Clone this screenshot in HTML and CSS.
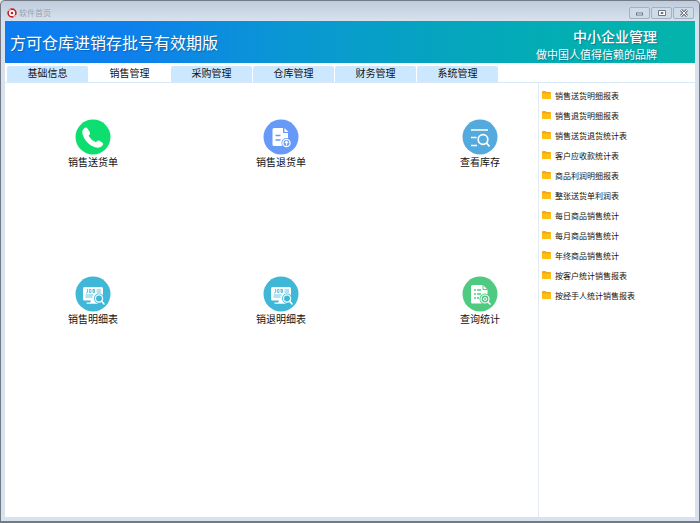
FILE: index.html
```html
<!DOCTYPE html>
<html lang="zh-CN">
<head>
<meta charset="utf-8">
<title>软件首页</title>
<link rel="stylesheet" href="styles.css">
</head>
<body>
<svg class="defs" aria-hidden="true">
  <symbol id="folder" viewBox="0 0 9 8">
    <path d="M0 1q0-1 1-1h2.5l1 1H8q1 0 1 1v5q0 1-1 1H1Q0 8 0 7z" fill="#f9a51c"/>
    <path d="M0 2.5h9V7q0 1-1 1H1Q0 8 0 7z" fill="#ffbf10"/>
  </symbol>
  <symbol id="report" viewBox="0 0 36 36">
    <circle cx="18" cy="18" r="17.5" fill="#3fb8d8"/>
    <rect x="8" y="11" width="20" height="13.5" rx="1.5" fill="#fff"/>
    <path d="M16 24h4l1 3h-6zM11.500 26.500h11v1.300h-11z" fill="#fff"/>
    <g fill="none" stroke="#3fb8d8" stroke-width=".8">
      <path d="M12.500 13v3q0 1-1.500 1M14.300 13.500h1.700v3h-1.700zM18 13v3.500M18 13.500h1.500v3H18M18 15h1.500M21.500 14h4.500M21.500 16h4.500M10.500 19h8M10.500 21h7"/>
    </g>
    <circle cx="24" cy="22.500" r="5" fill="#3fb8d8"/>
    <circle cx="24" cy="22.500" r="3.600" fill="#3fb8d8" stroke="#fff" stroke-width="1.300"/>
    <path d="M26.500 25l2.500 3" stroke="#fff" stroke-width="1.500" stroke-linecap="round"/>
  </symbol>
</svg>
<div class="window">
  <header class="titlebar">
    <svg class="app-icon" viewBox="0 0 10 10" aria-hidden="true">
      <circle cx="5" cy="5" r="3.900" fill="#fff" stroke="#b9252c" stroke-width="1.600"/>
      <circle cx="5" cy="5" r="1.300" fill="#b9252c"/>
      <path d="M1.500 3l2-2M8.500 7l-2 2" stroke="#fff"/>
    </svg>
    <span class="window-name">软件首页</span>
    <div class="window-buttons">
      <button type="button" aria-label="最小化"><svg viewBox="0 0 10 8"><rect x="1.500" y="4" width="6" height="2" fill="#fff" stroke="#6d7785"/></svg></button>
      <button type="button" aria-label="最大化"><svg viewBox="0 0 10 8"><path d="M1.500 1.500h7v5h-7zM4 3.500h2v1H4z" fill="#fff" stroke="#6d7785"/></svg></button>
      <button type="button" aria-label="关闭"><svg viewBox="0 0 10 8"><path d="M2 1l6 6M8 1L2 7" stroke="#6d7785" stroke-width="3"/><path d="M2 1l6 6M8 1L2 7" stroke="#fff"/></svg></button>
    </div>
  </header>
  <div class="banner">
    <h1>方可仓库进销存批号有效期版</h1>
    <div class="slogan">
      <strong>中小企业管理</strong>
      <span>做中国人值得信赖的品牌</span>
    </div>
  </div>
  <nav class="tabs">
    <button type="button">基础信息</button>
    <button type="button" class="active">销售管理</button>
    <button type="button">采购管理</button>
    <button type="button">仓库管理</button>
    <button type="button">财务管理</button>
    <button type="button">系统管理</button>
  </nav>
  <div class="content">
    <main class="shortcuts">
      <button type="button">
        <svg viewBox="0 0 36 36"><circle cx="18" cy="18" r="17.500" fill="#0cdf70"/><path d="M9 9.500q2-2 3.500 0l2.500 4q.8 1.700-1.500 3.200 2.500 4.500 7.500 6.600 1.500-2.500 3.500-1.500l3 2q1.500 1.300-.5 3.200-3.500 3.500-10 0Q9.500 22.500 7.500 15q-.8-3.500 1.500-5.500z" fill="#fff"/></svg>
        <span>销售送货单</span>
      </button>
      <button type="button">
        <svg viewBox="0 0 36 36"><circle cx="18" cy="18" r="17.500" fill="#6699f8"/><path d="M11 9h9v5h5v13H11q-1.500 0-1.500-1.500v-15Q9.500 9 11 9zM21.500 9l4 4h-4z" fill="#fff"/><path d="M12.500 16.500h5M12.500 21h5" stroke="#6699f8" stroke-width="1.600"/><circle cx="23.500" cy="24" r="5" fill="#6699f8"/><circle cx="23.500" cy="24" r="3.600" fill="none" stroke="#fff" stroke-width="1.300"/><path d="M23.500 26.500v-4M21.800 24l1.700-1.700 1.700 1.700" fill="none" stroke="#fff" stroke-width="1.100"/></svg>
        <span>销售退货单</span>
      </button>
      <button type="button">
        <svg viewBox="0 0 36 36"><circle cx="18" cy="18" r="17.500" fill="#54a9dd"/><g fill="none" stroke="#fff" stroke-width="1.700"><path d="M9 11h17M9 18.500h5.500M9 26.500h6"/><circle cx="21" cy="20.500" r="4.800"/><path d="M24.500 24l3 3.500"/></g></svg>
        <span>查看库存</span>
      </button>
      <button type="button">
        <svg><use href="#report"/></svg>
        <span>销售明细表</span>
      </button>
      <button type="button">
        <svg><use href="#report"/></svg>
        <span>销退明细表</span>
      </button>
      <button type="button">
        <svg viewBox="0 0 36 36"><circle cx="18" cy="18" r="17.500" fill="#4ecb80"/><path d="M10.500 9H21l4.500 4.500v14h-15q-1.500 0-1.500-1.500V10.500Q9 9 10.500 9z" fill="#fff"/><path d="M21 9v4.500h4.500" fill="none" stroke="#4ecb80"/><path d="M12 14h2m1 0h4M12 18h2m1 0h4M12 22h2m1 0h2" stroke="#4ecb80" stroke-width="1.300"/><circle cx="23" cy="23" r="5.500" fill="#4ecb80"/><circle cx="23" cy="23" r="4" fill="#4ecb80" stroke="#fff" stroke-width="1.200"/><circle cx="23" cy="23" r="1.500" fill="none" stroke="#fff"/><path d="M26 26l2.500 2.500" stroke="#fff" stroke-width="1.500"/></svg>
        <span>查询统计</span>
      </button>
    </main>
    <aside class="reports">
      <a href="#"><svg><use href="#folder"/></svg>销售送货明细报表</a>
      <a href="#"><svg><use href="#folder"/></svg>销售退货明细报表</a>
      <a href="#"><svg><use href="#folder"/></svg>销售送货退货统计表</a>
      <a href="#"><svg><use href="#folder"/></svg>客户应收款统计表</a>
      <a href="#"><svg><use href="#folder"/></svg>商品利润明细报表</a>
      <a href="#"><svg><use href="#folder"/></svg>整张送货单利润表</a>
      <a href="#"><svg><use href="#folder"/></svg>每日商品销售统计</a>
      <a href="#"><svg><use href="#folder"/></svg>每月商品销售统计</a>
      <a href="#"><svg><use href="#folder"/></svg>年终商品销售统计</a>
      <a href="#"><svg><use href="#folder"/></svg>按客户统计销售报表</a>
      <a href="#"><svg><use href="#folder"/></svg>按经手人统计销售报表</a>
    </aside>
  </div>
</div>
</body>
</html>
```
FILE: styles.css
```css
* {
  box-sizing: border-box;
}

body {
  margin: 0;
  background: #e4e8ee;
  font-family: "Noto Sans CJK SC", sans-serif;
  color: #111;
}

button {
  margin: 0;
  padding: 0;
  border: 0;
  background: none;
  color: inherit;
  font: inherit;
}

.defs {
  position: absolute;
  width: 0;
  height: 0;
}

.window {
  display: flex;
  flex-direction: column;
  min-height: 100vh;
  padding: 0 4px 4px;
  border: 1px solid #727a85;
  border-bottom-width: 2px;
  border-radius: 5px 5px 0 0;
  background: linear-gradient(#bfccdc, #d8e2ee 20px);
}

.titlebar {
  display: flex;
  align-items: center;
  height: 20px;
  padding: 4px 1px 0 2px;
}

.app-icon {
  width: 10px;
  height: 10px;
}

.window-name {
  margin-left: 2px;
  color: #9aa3ae;
  font-size: 8px;
  line-height: 12px;
}

.window-buttons {
  display: flex;
  gap: 1px;
  margin-left: auto;
}

.window-buttons button {
  display: grid;
  place-items: center;
  width: 21px;
  height: 12px;
  border: 1px solid #a3b1c4;
  border-radius: 2px;
  background: #d0dbe8;
}

.window-buttons svg {
  width: 10px;
  height: 8px;
}

.banner {
  display: flex;
  align-items: center;
  justify-content: space-between;
  height: 42px;
  padding: 0 38px 0 5px;
  background: linear-gradient(90deg, #0c7cf0, #0e80ec 18%, #0a96d4 40%, #05a6bd 66%, #02b0b0 85%, #04b4ab);
  color: #fff;
  text-shadow: 1px 1px 1px #0a4c8088;
}

h1 {
  margin: 0;
  font-size: 16px;
  font-weight: 400;
  line-height: 24px;
}

.slogan {
  display: flex;
  flex-direction: column;
  align-items: flex-end;
  padding-top: 4px;
}

.slogan strong {
  font-size: 14px;
  font-weight: 500;
  line-height: 20px;
}

.slogan span {
  font-size: 11px;
  line-height: 16px;
}

.tabs {
  display: flex;
  gap: 1px;
  padding: 3px 2px 0;
  background: #fff;
}

.tabs button {
  width: 81px;
  height: 16px;
  padding-bottom: 2px;
  border-radius: 2px 2px 0 0;
  background: #cce8ff;
  font-size: 10px;
  line-height: 14px;
}

.tabs .active {
  background: #fff;
}

.content {
  display: flex;
  flex: 1;
  border-top: 1px solid #d8eafa;
  background: #fff;
}

.shortcuts {
  display: grid;
  flex: 1;
  grid-template-columns: 94fr 282fr 116fr;
  grid-auto-rows: 157px;
  padding: 36px 0 0 41px;
}

.shortcuts button {
  display: flex;
  flex-direction: column;
  align-items: center;
  font-size: 10px;
  line-height: 14px;
}

.shortcuts svg {
  width: 36px;
  height: 36px;
}

.reports {
  display: flex;
  flex-direction: column;
  width: 157px;
  padding: 2px 3px;
  border-left: 1px solid #e3eaf2;
}

.reports a {
  display: flex;
  align-items: center;
  gap: 4px;
  height: 20px;
  color: #111;
  font-size: 8px;
  text-decoration: none;
}

.reports svg {
  width: 9px;
  height: 8px;
}
```
